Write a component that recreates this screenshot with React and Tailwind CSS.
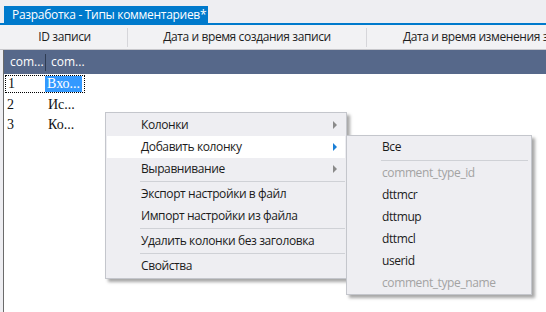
import React from "react";

const ui = { fontFamily: '"Open Sans", "Noto Sans", sans-serif' };
const serif = { fontFamily: '"Liberation Serif", "Times New Roman", serif' };

function Arrow({ active }) {
  return (
    <span
      className={
        "w-0 h-0 border-t-[4px] border-b-[4px] border-l-[4px] border-t-transparent border-b-transparent " +
        (active ? "border-l-[#1a7fd6]" : "border-l-[#8a8a8a]")
      }
    />
  );
}

function Item({ label, arrow, active, disabled, pl = "pl-[34px]" }) {
  return (
    <div
      className={
        "h-[22px] flex items-center justify-between pr-[8px] mx-[1px] " +
        pl +
        (active ? " bg-white" : "")
      }
    >
      <span className={disabled ? "text-[#a3a3a3]" : "text-[#1b1b1b]"}>{label}</span>
      {arrow && <Arrow active={active} />}
    </div>
  );
}

function Sep({ cls = "ml-[34px]" }) {
  return (
    <div className="h-[3px] flex flex-col justify-center">
      <div className={"h-px bg-[#cfd1d6] mr-[1px] " + cls} />
    </div>
  );
}

export default function App() {
  return (
    <div
      className="w-[546px] h-[312px] relative overflow-hidden bg-[#eeeef2] flex flex-col text-[12px] tracking-[-0.4px] whitespace-nowrap"
      style={ui}
    >
      {/* tab strip */}
      <div className="h-[23px] flex items-end pl-[4px] shrink-0">
        <div className="h-[17px] w-[204px] bg-[#007acc] text-white flex items-center pl-[8px] leading-none tracking-[-0.3px]">
          Разработка - Типы комментариев*
        </div>
      </div>
      <div className="h-[2px] bg-[#007acc] shrink-0" />
      {/* column header row */}
      <div className="h-[25px] flex items-center shrink-0 text-[#1e1e1e] bg-[#f2f2f4] border-b border-[#c8c8cc] overflow-hidden">
        <div className="w-[127px] shrink-0 flex justify-center pl-[2px]">ID записи</div>
        <div className="w-px h-[19px] bg-[#d6d6da] shrink-0" />
        <div className="w-[238px] shrink-0 flex justify-center">Дата и время создания записи</div>
        <div className="w-px h-[19px] bg-[#d6d6da] shrink-0" />
        <div className="pl-[36px] shrink-0">Дата и время изменения записи</div>
      </div>
      {/* grid */}
      <div className="flex-1 flex pl-[2px]">
        <div className="w-px bg-[#6b6b6b] ml-px" />
        <div className="flex-1 bg-white flex flex-col">
          <div className="h-[24px] bg-[#56688a] flex items-center text-white shrink-0 tracking-normal">
            <div className="w-[41px] pl-[6px]">com...</div>
            <div className="w-px h-[17px] bg-[#2e3b52]" />
            <div className="pl-[5px]">com...</div>
          </div>
          <div className="h-[20px] pt-[1px] tracking-normal" style={serif}>
            <div className="h-[18px] w-[80px] ml-[1px] border border-dotted border-black flex text-[14px] leading-none">
              <div className="w-[39px] pl-[2px] flex items-center text-[#111]">1</div>
              <div className="w-[37px] bg-[#3399ff] text-white flex items-center pl-[2px]">Вхо...</div>
            </div>
          </div>
          {["Ис...", "Ко..."].map((t, i) => (
            <div key={i} className="h-[20px] flex items-center text-[14px] text-[#111] tracking-normal" style={serif}>
              <div className="w-[41px] pl-[3px]">{i + 2}</div>
              <div className="pl-[3px]">{t}</div>
            </div>
          ))}
        </div>
      </div>

      {/* context menu */}
      <div className="absolute left-[105px] top-[112px] w-[242px] bg-[#eeeef2] border border-[#c4c6cc] py-px shadow-[3px_3px_3px_rgba(0,0,0,0.35)]">
        <Item label="Колонки" arrow />
        <Item label="Добавить колонку" arrow active />
        <Item label="Выравнивание" arrow />
        <Sep />
        <Item label="Экспорт настройки в файл" />
        <Item label="Импорт настройки из файла" />
        <Sep />
        <Item label="Удалить колонки без заголовка" />
        <Sep />
        <Item label="Свойства" />
      </div>

      {/* submenu */}
      <div className="absolute left-[346px] top-[135px] w-[186px] bg-[#eeeef2] border border-[#c4c6cc] shadow-[3px_3px_3px_rgba(0,0,0,0.35)]">
        <Item label="Все" pl="pl-[34px]" />
        <div className="h-[4px] flex flex-col justify-center">
          <div className="h-px bg-[#cfd1d6] ml-[34px] mr-[3px]" />
        </div>
        <Item label="comment_type_id" disabled />
        <Item label="dttmcr" />
        <Item label="dttmup" />
        <Item label="dttmcl" />
        <Item label="userid" />
        <Item label="comment_type_name" disabled />
      </div>
    </div>
  );
}
